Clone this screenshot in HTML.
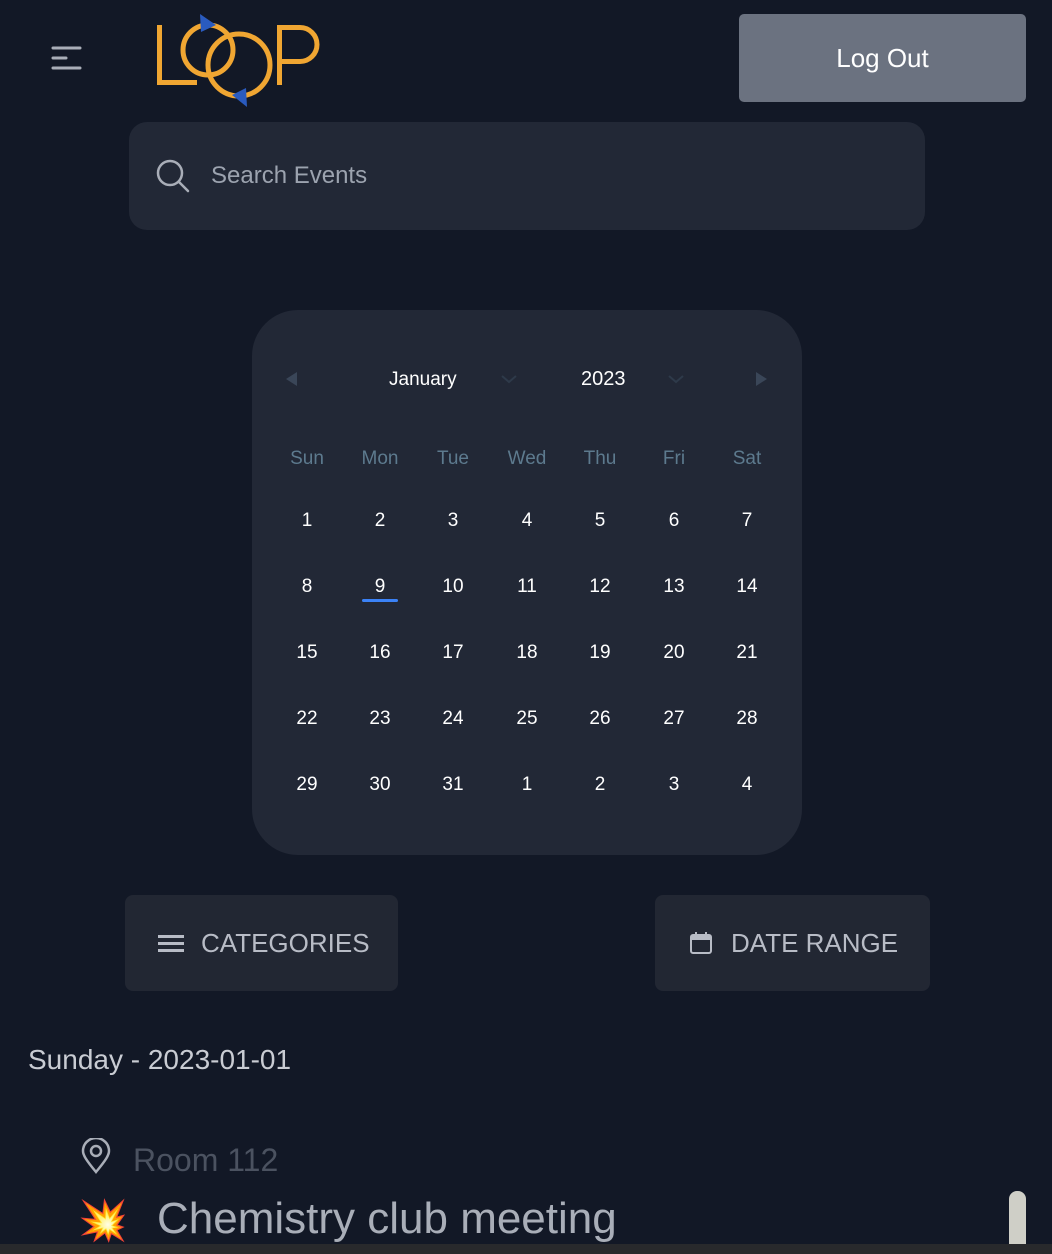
<!DOCTYPE html>
<html><head><meta charset="utf-8"><style>
*{margin:0;padding:0;box-sizing:border-box}
body{width:1052px;height:1254px;background:#121826;font-family:"Liberation Sans",sans-serif;position:relative;overflow:hidden;color:#fff}
.abs{position:absolute}
.cal{left:252px;top:310px;width:550px;height:545px;background:#222836;border-radius:46px}
.c{position:absolute;width:60px;text-align:center;font-size:19px;transform:translateX(-30px)}
.btn{background:#222733;border-radius:8px;color:#b8bcc6;font-size:26px;display:flex;align-items:center}
</style></head><body>
<svg class="abs" style="left:50px;top:44px" width="34" height="28"><g stroke="#a9aeb8" stroke-width="3" stroke-linecap="round"><line x1="3" y1="4" x2="30" y2="4"/><line x1="3" y1="14" x2="16" y2="14"/><line x1="3" y1="24" x2="30" y2="24"/></g></svg>
<svg class="abs" style="left:150px;top:10px" width="180" height="100">
<g fill="none" stroke="#f0a632" stroke-width="5">
<path d="M9.5 15 V72.5 H47"/>
<circle cx="58" cy="40" r="25"/>
<circle cx="89" cy="55" r="31"/>
<path d="M129.5 75 V17.5 H150 a17 17 0 0 1 0 34 H129.5"/>
</g>
<polygon points="50,4 66,15 51,22" fill="#2a5bbf"/>
<polygon points="82,85 96,78 97,97" fill="#2a5bbf"/>
</svg>
<div class="abs" style="left:739px;top:14px;width:287px;height:88px;background:#6b7280;border-radius:5px;color:#fff;font-size:26px;display:flex;align-items:center;justify-content:center">Log Out</div>
<div class="abs" style="left:129px;top:122px;width:796px;height:108px;background:#222836;border-radius:18px;display:flex;align-items:center">
<svg style="margin-left:26px" width="36" height="36"><circle cx="15" cy="15" r="12" fill="none" stroke="#a9aeb8" stroke-width="2.5"/><line x1="24" y1="24" x2="33" y2="33" stroke="#a9aeb8" stroke-width="2.5" stroke-linecap="round"/></svg>
<span style="margin-left:20px;color:#9ca3af;font-size:24px">Search Events</span></div>
<div class="abs cal"></div>
<div class="abs" style="left:286px;top:372px;width:0;height:0;border-top:7px solid transparent;border-bottom:7px solid transparent;border-right:11px solid #3a4658"></div>
<div class="abs" style="left:756px;top:372px;width:0;height:0;border-top:7px solid transparent;border-bottom:7px solid transparent;border-left:11px solid #3a4658"></div>
<div class="abs" style="left:389px;top:369px;font-size:19px">January</div>
<div class="abs" style="left:581px;top:368px;font-size:20px">2023</div>
<svg class="abs" style="left:500px;top:374px" width="18" height="10"><path d="M2 2 L9 8 L16 2" stroke="#2e3a4a" stroke-width="2" fill="none"/></svg>
<svg class="abs" style="left:667px;top:374px" width="18" height="10"><path d="M2 2 L9 8 L16 2" stroke="#2e3a4a" stroke-width="2" fill="none"/></svg>
<div id="g"></div>
<div class="abs" style="left:362px;top:599px;width:36px;height:3px;background:#3b82f6;border-radius:2px"></div>
<div class="abs btn" style="left:125px;top:895px;width:273px;height:96px"><svg style="margin-left:33px" width="26" height="20"><g fill="#b8bcc6"><rect y="2" width="26" height="3"/><rect y="9" width="26" height="3"/><rect y="16" width="26" height="3"/></g></svg><span style="margin-left:17px">CATEGORIES</span></div>
<div class="abs btn" style="left:655px;top:895px;width:275px;height:96px"><svg style="margin-left:34px" width="24" height="24"><rect x="2" y="4" width="20" height="18" rx="2" fill="none" stroke="#b8bcc6" stroke-width="2"/><rect x="2" y="4" width="20" height="5" fill="#b8bcc6"/><rect x="6" y="1" width="2" height="5" fill="#b8bcc6"/><rect x="16" y="1" width="2" height="5" fill="#b8bcc6"/></svg><span style="margin-left:18px">DATE RANGE</span></div>
<div class="abs" style="left:28px;top:1044px;font-size:28px;color:#c9ccd3">Sunday - 2023-01-01</div>
<svg class="abs" style="left:80px;top:1138px" width="32" height="36"><path d="M16 34 C6 22 3 17 3 13 a13 13 0 0 1 26 0 c0 4 -3 9 -13 21z" fill="none" stroke="#a9aeb8" stroke-width="2.5"/><circle cx="16" cy="13" r="5" fill="none" stroke="#a9aeb8" stroke-width="2.5"/></svg>
<div class="abs" style="left:133px;top:1142px;font-size:32px;color:#4b5260">Room 112</div>
<div class="abs" style="left:78px;top:1196px;font-size:40px;line-height:50px">💥</div>
<div class="abs" style="left:157px;top:1194px;font-size:44px;color:#a9aeb8">Chemistry club meeting</div>
<div class="abs" style="left:1009px;top:1191px;width:17px;height:60px;background:#cfcfc7;border-radius:8px 8px 0 0"></div>
<div class="abs" style="left:0;top:1244px;width:1052px;height:10px;background:#28292c"></div>
<script>
var cols=[307,380,453,527,600,674,747],h='';
var dn=['Sun','Mon','Tue','Wed','Thu','Fri','Sat'];
dn.forEach(function(d,i){h+='<div class="c" style="left:'+cols[i]+'px;top:448px;color:#5d7a8e">'+d+'</div>'});
var days=[];for(var i=1;i<=31;i++)days.push(i);days.push(1,2,3,4);
var rows=[510,576,642,708,774];
days.forEach(function(d,i){h+='<div class="c" style="left:'+cols[i%7]+'px;top:'+rows[Math.floor(i/7)]+'px">'+d+'</div>'});
document.getElementById('g').innerHTML=h;
</script>
</body></html>
